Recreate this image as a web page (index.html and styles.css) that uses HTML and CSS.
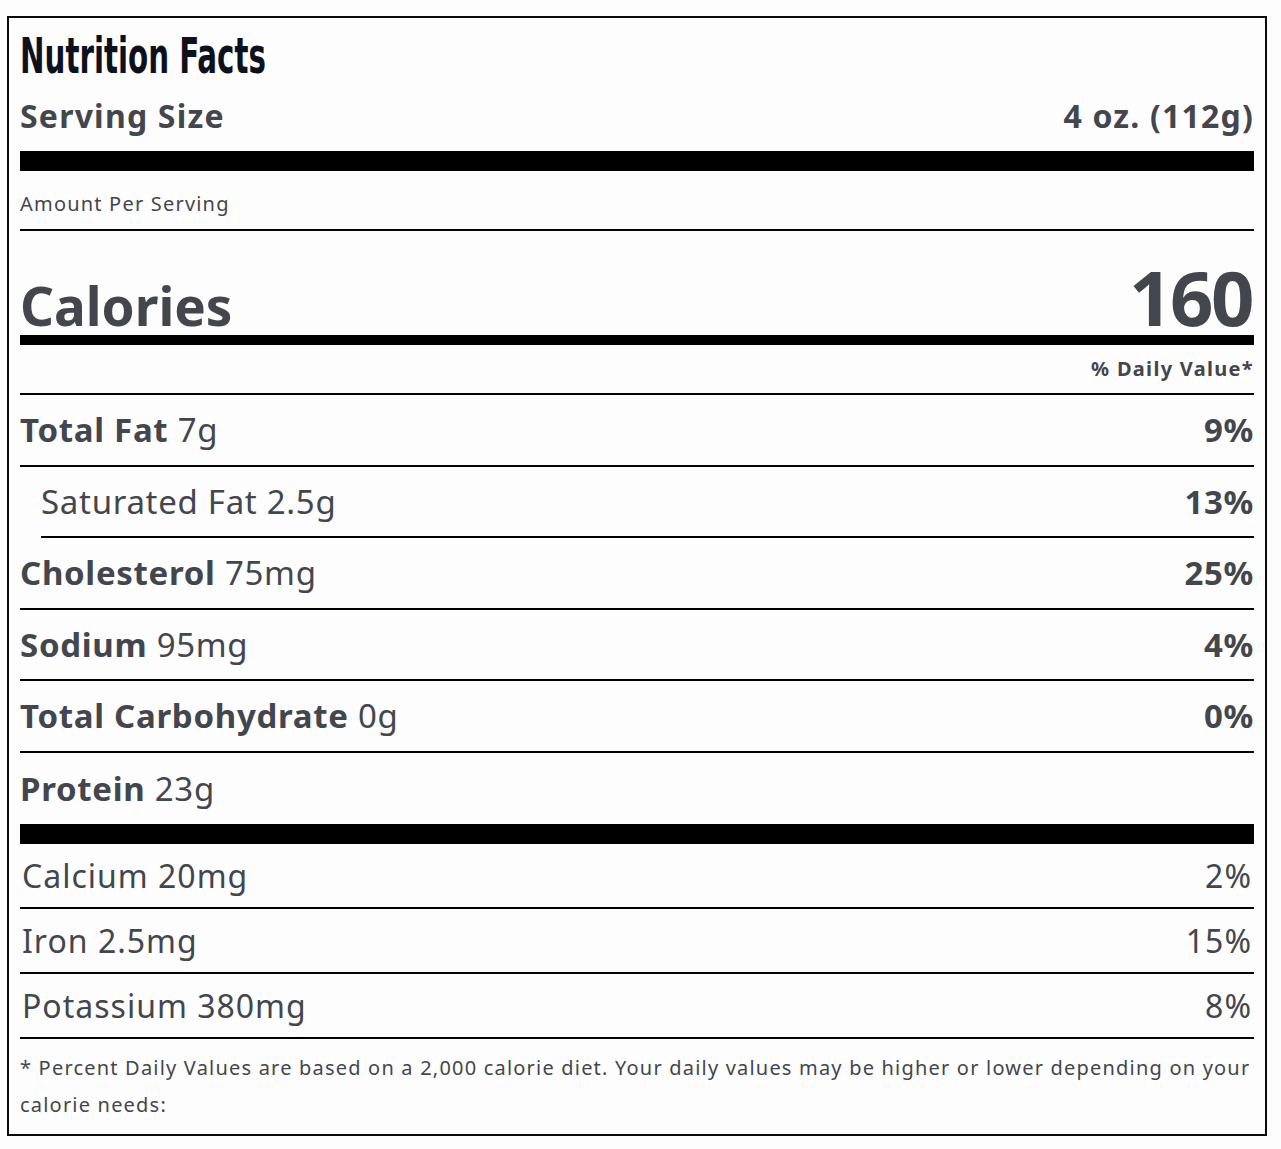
FILE: index.html
```html
<!DOCTYPE html>
<html lang="en">
<head>
<meta charset="utf-8">
<title>Nutrition Facts</title>
<link rel="stylesheet" href="styles.css">
</head>
<body>
<section class="label">
  <header class="label-head">
    <h1 class="title">Nutrition Facts</h1>
    <div class="serving">
      <span>Serving Size</span>
      <span>4 oz. (112g)</span>
    </div>
  </header>
  <div class="bar bar-thick"></div>
  <div class="amount">Amount Per Serving</div>
  <div class="calories">
    <span class="cal-label">Calories</span>
    <span class="cal-value">160</span>
  </div>
  <div class="dv-head">% Daily Value*</div>
  <ul class="nutrients">
    <li class="row"><span><b>Total Fat</b> 7g</span><b>9%</b></li>
    <li class="row row-sub"><span>Saturated Fat 2.5g</span><b>13%</b></li>
    <li class="row"><span><b>Cholesterol</b> 75mg</span><b>25%</b></li>
    <li class="row"><span><b>Sodium</b> 95mg</span><b>4%</b></li>
    <li class="row"><span><b>Total Carbohydrate</b> 0g</span><b>0%</b></li>
    <li class="row row-last"><span><b>Protein</b> 23g</span></li>
  </ul>
  <div class="bar bar-sep"></div>
  <ul class="minerals">
    <li class="mrow"><span>Calcium 20mg</span><span>2%</span></li>
    <li class="mrow"><span>Iron 2.5mg</span><span>15%</span></li>
    <li class="mrow"><span>Potassium 380mg</span><span>8%</span></li>
  </ul>
  <p class="footnote">* Percent Daily Values are based on a 2,000 calorie diet. Your daily values may be higher or lower depending on your calorie needs:</p>
</section>
</body>
</html>
```

FILE: styles.css
```css
html, body {
  margin: 0;
  padding: 0;
  background: #fdfdfd;
}

body {
  padding: 16px 0 0 7px;
  font-family: "Noto Sans", "Open Sans", sans-serif;
  color: #43464d;
}

.label {
  box-sizing: border-box;
  width: 1260px;
  border: 2px solid #0a0a0a;
  padding: 0 11px;
}

.label-head {
  padding-top: 11px;
}

.title {
  margin: 0;
  font-family: "DejaVu Sans Condensed", "DejaVu Sans", sans-serif;
  font-stretch: condensed;
  font-weight: 700;
  font-size: 49px;
  line-height: 56px;
  color: #0c111c;
  transform: scaleX(0.665);
  transform-origin: left center;
  white-space: nowrap;
}

.serving {
  display: flex;
  justify-content: space-between;
  align-items: baseline;
  margin-top: 11px;
  font-weight: 700;
  font-size: 32px;
  line-height: 40px;
  letter-spacing: 1.2px;
}

.bar {
  background: #000;
}

.bar-thick {
  height: 20px;
  margin-top: 15px;
}

.amount {
  font-size: 20px;
  letter-spacing: 1.2px;
  line-height: 26px;
  padding: 20px 0 12px;
  border-bottom: 2px solid #000;
}

.calories {
  display: flex;
  justify-content: space-between;
  align-items: baseline;
  font-weight: 700;
  height: 114px;
  box-sizing: border-box;
  border-bottom: 10px solid #000;
  padding-top: 36px;
}

.cal-label {
  font-size: 53px;
  line-height: 60px;
}

.cal-value {
  font-size: 76px;
  line-height: 60px;
  letter-spacing: -2.5px;
  margin-right: 2px;
}

.dv-head {
  text-align: right;
  font-weight: 700;
  font-size: 20px;
  letter-spacing: 1.3px;
  line-height: 26px;
  padding: 11px 0 11px;
  border-bottom: 2px solid #000;
}

.nutrients,
.minerals {
  list-style: none;
  margin: 0;
  padding: 0;
}

.row {
  display: flex;
  justify-content: space-between;
  align-items: baseline;
  height: 69.5px;
  line-height: 69.5px;
  font-size: 33px;
  letter-spacing: 0.7px;
  border-bottom: 2px solid #000;
}

.row b {
  font-weight: 700;
}

.row-sub {
  margin-left: 21px;
}

.row-last {
  border-bottom: 0;
  height: 71px;
  line-height: 71px;
}

.bar-sep {
  height: 20px;
}

.mrow {
  display: flex;
  justify-content: space-between;
  align-items: baseline;
  height: 63px;
  line-height: 63px;
  font-size: 32px;
  letter-spacing: 1px;
  padding: 0 2px;
  border-bottom: 2px solid #000;
}

.footnote {
  margin: 0;
  padding: 10px 0 11px;
  font-size: 20px;
  line-height: 37px;
  letter-spacing: 1.2px;
}
```
